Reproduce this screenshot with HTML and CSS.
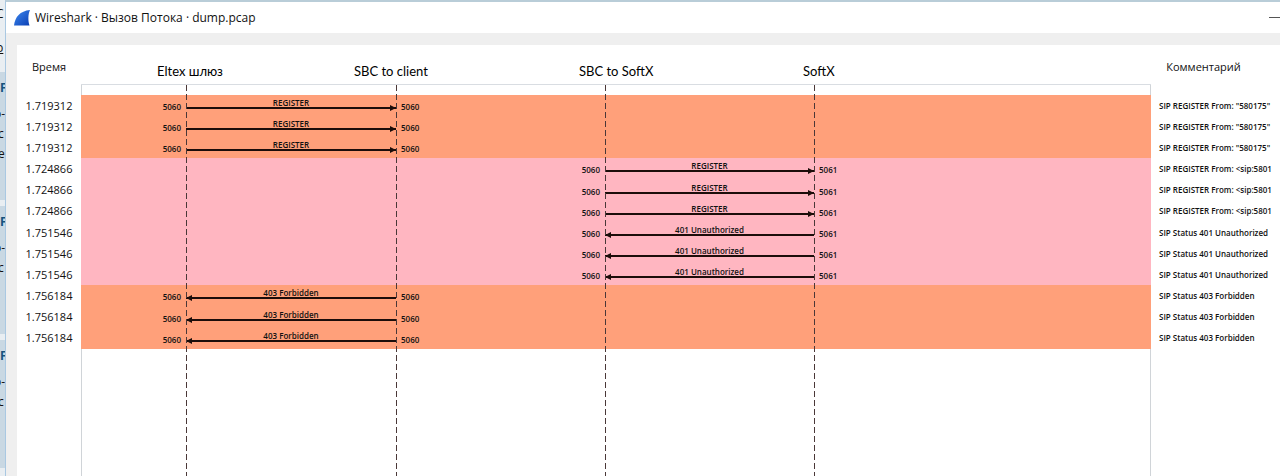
FILE: index.html
```html
<!DOCTYPE html>
<html lang="ru">
<head>
    <meta charset="UTF-8">
    <meta name="viewport" content="width=device-width, initial-scale=1.0">
    <title>Wireshark · Вызов Потока · dump.pcap</title>
    <link rel="stylesheet" href="styles.css">
</head>
<body>
    <div class="desktop">
        <aside class="page-behind">
            <p class="crumb">С</p>
            <p class="crumb crumb-link">р</p>
            <div class="card"><b>F</b><span>о-</span><span>с</span><span>е</span></div>
            <div class="card"><b>F</b><span>о-</span><span>с</span></div>
            <div class="card"><b>F</b><span>о-</span><span>с</span></div>
        </aside>

        <main class="window">
            <header class="titlebar">
                <svg class="fin" viewBox="0 0 16 16" aria-hidden="true">
                    <defs>
                        <linearGradient id="fin" x1="0" y1="0" x2="1" y2="1">
                            <stop offset="0" stop-color="#3f8af0"/>
                            <stop offset="1" stop-color="#0a3fb4"/>
                        </linearGradient>
                    </defs>
                    <path d="M0 15.500C1 7 6 1 16 0C14 4 14 11 15.500 15.500Z" fill="url(#fin)"/>
                </svg>
                <h1>Wireshark · Вызов Потока · dump.pcap</h1>
                <button class="minimize" aria-label="Свернуть"></button>
            </header>

            <div class="flow">
                <table>
                    <thead>
                        <tr>
                            <th class="time">Время</th>
                            <th class="chart">
                                <div class="hosts">
                                    <span>Eltex шлюз</span>
                                    <span>SBC to client</span>
                                    <span>SBC to SoftX</span>
                                    <span>SoftX</span>
                                </div>
                                <div class="frame-top"></div>
                            </th>
                            <th class="comment">Комментарий</th>
                        </tr>
                    </thead>
                    <tbody id="rows"></tbody>
                </table>
                <div class="rest"></div>
                <div class="lifelines"><i></i><i></i><i></i><i></i></div>
            </div>
        </main>
    </div>

    <script>
        // каждый пакет захвачен три раза
        const groups = [
            { time: '1.719312', call: 'orange', leg: 'client', dir: 'right', ports: ['5060', '5060'], label: 'REGISTER', comment: 'SIP REGISTER From: "580175"' },
            { time: '1.724866', call: 'pink', leg: 'softx', dir: 'right', ports: ['5060', '5061'], label: 'REGISTER', comment: 'SIP REGISTER From: <sip:5801' },
            { time: '1.751546', call: 'pink', leg: 'softx', dir: 'left', ports: ['5060', '5061'], label: '401 Unauthorized', comment: 'SIP Status 401 Unauthorized' },
            { time: '1.756184', call: 'orange', leg: 'client', dir: 'left', ports: ['5060', '5060'], label: '403 Forbidden', comment: 'SIP Status 403 Forbidden' }
        ];

        const esc = (s) => s.replace(/</g, '&lt;');
        const rows = document.getElementById('rows');

        groups.forEach((g) => {
            for (let i = 0; i < 3; i++) {
                rows.insertAdjacentHTML('beforeend', `
                    <tr class="${g.call}">
                        <td class="time">${g.time}</td>
                        <td class="chart">
                            <div class="message ${g.leg}">
                                <span class="port">${g.ports[0]}</span>
                                <span class="arrow ${g.dir}">${g.label}</span>
                                <span class="port">${g.ports[1]}</span>
                            </div>
                        </td>
                        <td class="comment">${esc(g.comment)}</td>
                    </tr>`);
            }
        });
    </script>
</body>
</html>
```
FILE: styles.css
```css
* {
    margin: 0;
    padding: 0;
    box-sizing: border-box;
}

body {
    height: 100vh;
    overflow: hidden;
    background: #ffffff;
    color: #111111;
    font-family: 'Open Sans', 'Noto Sans', sans-serif;
}

.desktop {
    display: flex;
    height: 100%;
}

/* Страница под окном */
.page-behind {
    flex: none;
    width: 5px;
    overflow: hidden;
    background: #e9eef2;
    font-size: 12px;
    line-height: 20px;
}

.crumb {
    height: 36px;
    padding-top: 4px;
    text-indent: -4px;
}

.crumb-link {
    padding-top: 2px;
    text-decoration: underline;
}

.card {
    display: flex;
    flex-direction: column;
    height: 128px;
    margin-bottom: 6px;
    padding-top: 6px;
    background: #c9d8e3;
    text-indent: -2px;
}

.card b {
    margin-bottom: 6px;
    color: #14527d;
    text-indent: 0;
}

.card b + span {
    text-indent: -6px;
}

.window {
    flex: 1;
    min-width: 0;
    display: flex;
    flex-direction: column;
    background: #efefef;
    border-top: 2px solid #b9cdd8;
    border-left: 1px solid #a9c8e2;
}

.titlebar {
    display: flex;
    align-items: center;
    height: 31px;
    padding-left: 8px;
    background: #ffffff;
}

.fin {
    width: 16px;
    height: 16px;
}

.titlebar h1 {
    flex: 1;
    padding-left: 5px;
    font-size: 12px;
    font-weight: normal;
}

.minimize {
    width: 11px;
    height: 1px;
    border: none;
    background: #555555;
}

/* Диаграмма потока */
.flow {
    position: relative;
    flex: 1;
    display: flex;
    flex-direction: column;
    margin: 12px 0 0 11px;
    background: #ffffff;
    overflow: hidden;
}

table {
    width: 100%;
    height: 304px;
    border-collapse: collapse;
    table-layout: fixed;
}

th {
    font-weight: normal;
    font-size: 11px;
    vertical-align: top;
}

thead tr {
    height: 50px;
}

th.time,
th.comment {
    padding-top: 14px;
    line-height: 16px;
}

.time {
    width: 64px;
    text-align: center;
    font-size: 11px;
    line-height: 16px;
}

.comment {
    width: 129px;
    white-space: nowrap;
    overflow: hidden;
}

td.comment {
    padding-left: 8px;
    font-size: 8px;
    font-weight: 600;
    line-height: 12px;
}

th.comment {
    padding-right: 24px;
}

.hosts {
    display: grid;
    grid-template-columns: 197px 225px 224px auto;
    height: 40px;
    padding: 16px 0 0 76px;
    border-bottom: 1px solid #d9dde2;
    color: #000000;
    font-family: Lato, 'Noto Sans', sans-serif;
    font-size: 13px;
    line-height: 20px;
    text-align: left;
}

.frame-top {
    height: 10px;
}

.frame-top,
.rest {
    border: solid #d0d4d8;
    border-width: 0 1px;
}

.orange .chart {
    background: #ffa07a;
}

.pink .chart {
    background: #ffb6c1;
}

td.chart {
    padding-top: 4px;
    vertical-align: top;
}

.message {
    display: grid;
    grid-template-columns: 100px 210px 40px;
    column-gap: 5px;
    align-items: start;
    font-size: 8px;
    font-weight: 600;
    line-height: 16px;
}

.message.softx {
    grid-template-columns: 519px 209px 40px;
}

.port:first-child {
    text-align: right;
}

.arrow {
    position: relative;
    border-bottom: 2px solid #1c0d0a;
    line-height: 8px;
    text-align: center;
}

.arrow::after {
    content: '';
    position: absolute;
    bottom: -4px;
    border: 3px solid transparent;
}

.arrow.right::after {
    right: 0;
    border-left: 6px solid #1c0d0a;
    border-right: none;
}

.arrow.left::after {
    left: 0;
    border-right: 6px solid #1c0d0a;
    border-left: none;
}

.rest {
    flex: 1;
    margin: 0 129px 0 64px;
}

/* Линии узлов поверх строк */
.lifelines {
    position: absolute;
    top: 40px;
    bottom: 0;
    left: 64px;
    display: grid;
    grid-template-columns: 210px 210px 209px 209px;
}

.lifelines i {
    justify-self: center;
    width: 1px;
    background: repeating-linear-gradient(#4a3838 0 6px, transparent 6px 9px);
}
```
